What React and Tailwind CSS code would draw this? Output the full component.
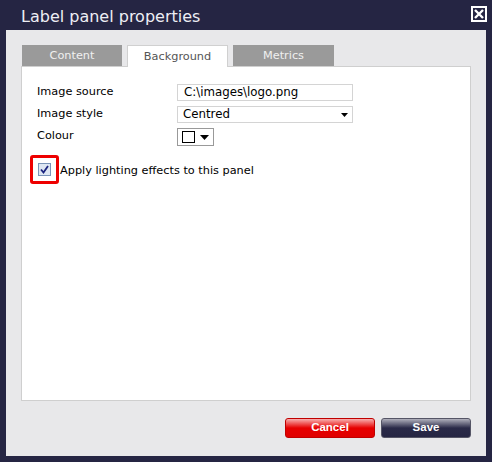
export default function App() {
  const font = { fontFamily: '"DejaVu Sans", Verdana, sans-serif' }
  return (
    <div className="flex h-[462px] w-[492px] flex-col bg-[#252543]" style={font}>
      <div className="flex h-[30px] items-center justify-between pl-[21px] pr-[5px]">
        <h1 className="mt-[3px] text-[16px] leading-none text-[#eeeef4]">Label panel properties</h1>
        <button className="mt-[-2px] flex h-[16px] w-[16px] items-center justify-center border-2 border-white">
          <svg width="10" height="10" viewBox="0 0 10 10">
            <path d="M1 1 L9 9 M9 1 L1 9" stroke="white" strokeWidth="2.4" />
          </svg>
        </button>
      </div>

      <div className="mx-[6px] flex h-[426px] flex-col bg-[#e8e8ea] px-[15px] pt-[15px]">
        <div className="flex h-[21px] gap-[5px] pl-[1px] text-[11.3px]">
          <div className="flex w-[100px] items-center justify-center bg-[#9a9a9a] pt-[2px] text-[#f0f0f0]">Content</div>
          <div className="relative z-10 flex h-[22px] w-[101px] items-center justify-center border border-b-0 border-[#d0d0d0] bg-white pt-[1px] text-[#555]">
            Background
          </div>
          <div className="flex w-[101px] items-center justify-center bg-[#9a9a9a] pt-[2px] text-[#f0f0f0]">Metrics</div>
        </div>

        <div className="h-[335px] border border-[#cfcfcf] bg-white pl-[15px] pt-[17px] text-[11.3px] text-black">
          <div className="grid grid-cols-[140px_176px] gap-y-[5px]">
            <span className="leading-[16px]">Image source</span>
            <div className="flex h-[17px] items-center border border-[#d4d4d4] pl-[6px] text-[11.8px] leading-none">C:\images\logo.png</div>

            <span className="leading-[16px]">Image style</span>
            <div className="flex h-[17px] items-center justify-between border border-[#d4d4d4] pl-[5px] pr-[4px] text-[11.8px] leading-none">
              <span>Centred</span>
              <svg width="7" height="4" viewBox="0 0 7 4"><path d="M0 0 H7 L3.5 4 Z" fill="black" /></svg>
            </div>

            <span className="leading-[16px]">Colour</span>
            <div className="flex h-[18px] w-[37px] items-center gap-[5px] border border-[#999] pl-[4px]">
              <div className="h-[12px] w-[13px] border border-black bg-white" />
              <svg width="9" height="5" viewBox="0 0 9 5"><path d="M0 0 H9 L4.5 5 Z" fill="black" /></svg>
            </div>
          </div>

          <div className="mt-[9px] ml-[-7px] flex items-center">
            <div className="flex h-[29px] w-[29px] items-center justify-center rounded-[3px] border-[3px] border-[#ee0000]">
              <div className="flex h-[13px] w-[13px] items-center justify-center border border-[#7a94b8] bg-[#dde6f2]">
                <svg width="9" height="9" viewBox="0 0 9 9">
                  <path d="M1 4.5 L3.5 7.5 L8 1" stroke="#1a237e" strokeWidth="1.8" fill="none" />
                </svg>
              </div>
            </div>
            <span className="ml-[1px] pt-[3px]">Apply lighting effects to this panel</span>
          </div>
        </div>

        <div className="mt-[17px] flex justify-end gap-[6px]" style={{ fontFamily: '"Liberation Sans", Arial, sans-serif' }}>
          <button className="h-[20px] w-[90px] rounded-[3px] border border-[#c00000] bg-[linear-gradient(#f8b0b0,#e60000_50%,#e00000)] text-[11.5px] font-bold leading-none text-white">
            Cancel
          </button>
          <button className="h-[20px] w-[90px] rounded-[3px] border border-[#555566] bg-[linear-gradient(#b0b0bc,#2a2a48_50%,#252543)] text-[11.5px] font-bold leading-none text-white">
            Save
          </button>
        </div>
      </div>
    </div>
  )
}
